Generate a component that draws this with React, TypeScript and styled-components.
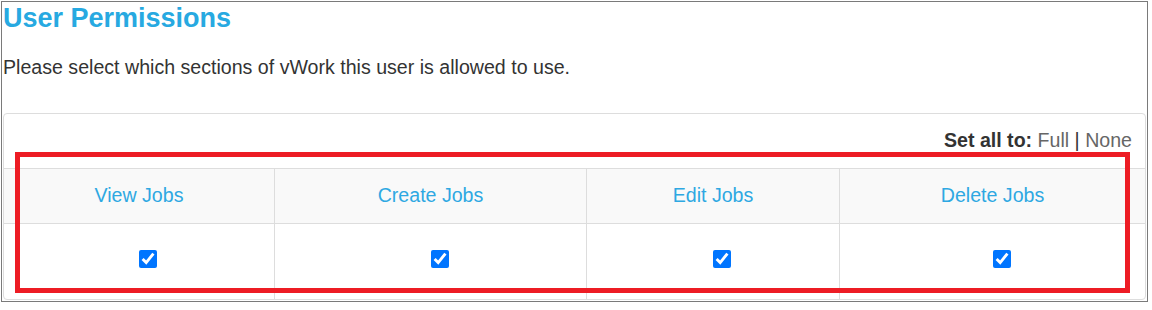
import React from "react";
import styled, { createGlobalStyle } from "styled-components";

const GlobalStyle = createGlobalStyle`
  html, body { margin: 0; padding: 0; background: #fff; }
  body { font-family: "Liberation Sans", Arial, sans-serif; color: #333; }
`;

const Frame = styled.div`
  position: relative;
  box-sizing: border-box;
  margin: 1px 0 0 1px;
  width: 1147px;
  height: 301px;
  border: 1px solid #7a7a7a;
  padding: 1px 1px 0 0;
  overflow: hidden;
  background: #fff;
`;

const Title = styled.h1`
  margin: 0;
  padding-left: 1px;
  font-size: 27px;
  line-height: 30px;
  font-weight: 700;
  color: #27a9e1;
`;

const Intro = styled.p`
  margin: 21px 0 0 0;
  padding-left: 1px;
  font-size: 19.6px;
  line-height: 27px;
  color: #333;
`;

const Panel = styled.div`
  box-sizing: border-box;
  margin: 32px 0 0 1px;
  height: 187px;
  border: 1px solid #dddddd;
  border-radius: 4px;
  overflow: hidden;
`;

const SetAllBar = styled.div`
  box-sizing: border-box;
  height: 54px;
  padding: 13px 13px 0 0;
  text-align: right;
  font-size: 19.6px;
  line-height: 27px;
  color: #333;
`;

const SetAllLabel = styled.b`
  font-weight: 700;
  color: #333;
`;

const SetAllLink = styled.span`
  color: #666;
`;

const Grid = styled.div`
  display: grid;
  grid-template-columns: 270px 312px 253px 306px;
  grid-template-rows: 55px 75px;
  border-top: 1px solid #dddddd;
`;

const HeadCell = styled.div<{ $first?: boolean }>`
  box-sizing: border-box;
  background: #f9f9f9;
  border-bottom: 1px solid #dddddd;
  border-left: ${(p) => (p.$first ? "none" : "1px solid #dddddd")};
  padding-top: 13px;
  text-align: center;
  font-size: 19.6px;
  line-height: 27px;
  color: #2ea8e2;
`;

const BodyCell = styled.div<{ $first?: boolean }>`
  box-sizing: border-box;
  border-left: ${(p) => (p.$first ? "none" : "1px solid #dddddd")};
  display: flex;
  justify-content: center;
  align-items: flex-start;
  padding-top: 26px;
`;

const Check = styled.input.attrs({ type: "checkbox" })`
  width: 18px;
  height: 18px;
  margin: 0 0 0 18px;
  accent-color: #0075ff;
`;

const Highlight = styled.div`
  position: absolute;
  left: 13px;
  top: 150px;
  width: 1115px;
  height: 141px;
  box-sizing: border-box;
  border: 5px solid #ed1c24;
  pointer-events: none;
`;

const columns = ["View Jobs", "Create Jobs", "Edit Jobs", "Delete Jobs"];

export default function App() {
  return (
    <>
      <GlobalStyle />
      <Frame>
        <Title>User Permissions</Title>
        <Intro>Please select which sections of vWork this user is allowed to use.</Intro>
        <Panel>
          <SetAllBar>
            <SetAllLabel>Set all to:</SetAllLabel> <SetAllLink>Full</SetAllLink> | <SetAllLink>None</SetAllLink>
          </SetAllBar>
          <Grid>
            {columns.map((c, i) => (
              <HeadCell key={c} $first={i === 0}>
                {c}
              </HeadCell>
            ))}
            {columns.map((c, i) => (
              <BodyCell key={c + "-cb"} $first={i === 0}>
                <Check defaultChecked />
              </BodyCell>
            ))}
          </Grid>
        </Panel>
        <Highlight />
      </Frame>
    </>
  );
}
